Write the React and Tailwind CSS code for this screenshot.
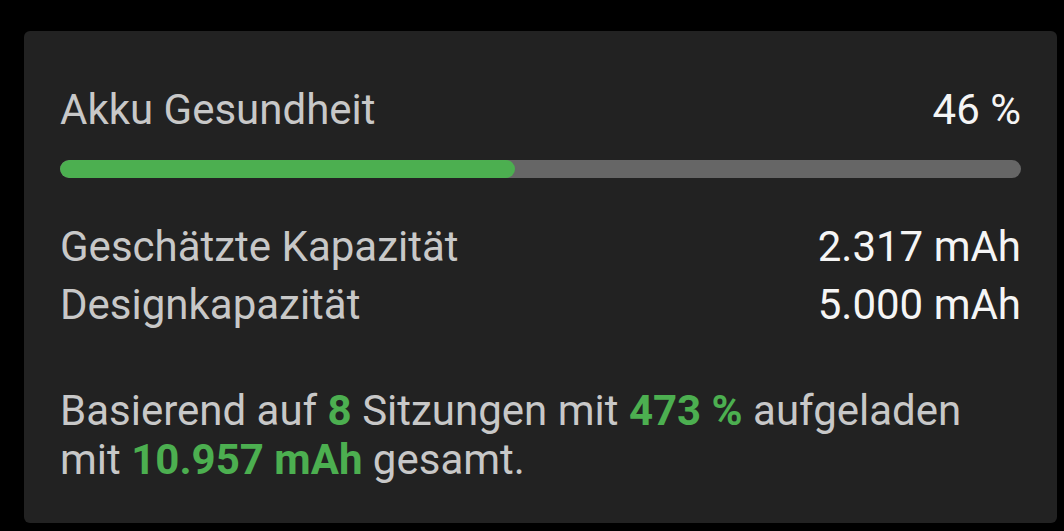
export default function App() {
  return (
    <div className="w-[1064px] h-[531px] bg-black overflow-hidden pt-[31px] pl-[24px]" style={{ fontFamily: "Roboto, 'Noto Sans', sans-serif" }}>
      <div className="w-[1033px] h-[492px] rounded-[6px] bg-[#222222] px-[36px] pt-[55px]">
        <div className="flex justify-between text-[42px] leading-[48px]">
          <span className="text-[#c8c8c8]">Akku Gesundheit</span>
          <span className="text-[#f5f5f5]">46 %</span>
        </div>
        <div className="mt-[26px] h-[18px] rounded-full bg-[#666666] overflow-hidden">
          <div className="h-full rounded-full bg-[#4caf50]" style={{ width: "47.3%" }} />
        </div>
        <div className="mt-[40px] flex justify-between text-[42px] leading-[58px]">
          <span className="text-[#c8c8c8]">Geschätzte Kapazität</span>
          <span className="text-[#f5f5f5]">2.317 mAh</span>
        </div>
        <div className="flex justify-between text-[42px] leading-[58px]">
          <span className="text-[#c8c8c8]">Designkapazität</span>
          <span className="text-[#f5f5f5]">5.000 mAh</span>
        </div>
        <p className="mt-[52px] text-[42px] leading-[49px] text-[#c8c8c8]">
          Basierend auf <span className="font-bold text-[#4caf50]">8</span> Sitzungen mit{" "}
          <span className="font-bold text-[#4caf50]">473 %</span> aufgeladen
          <br />
          mit <span className="font-bold text-[#4caf50]">10.957 mAh</span> gesamt.
        </p>
      </div>
    </div>
  );
}
